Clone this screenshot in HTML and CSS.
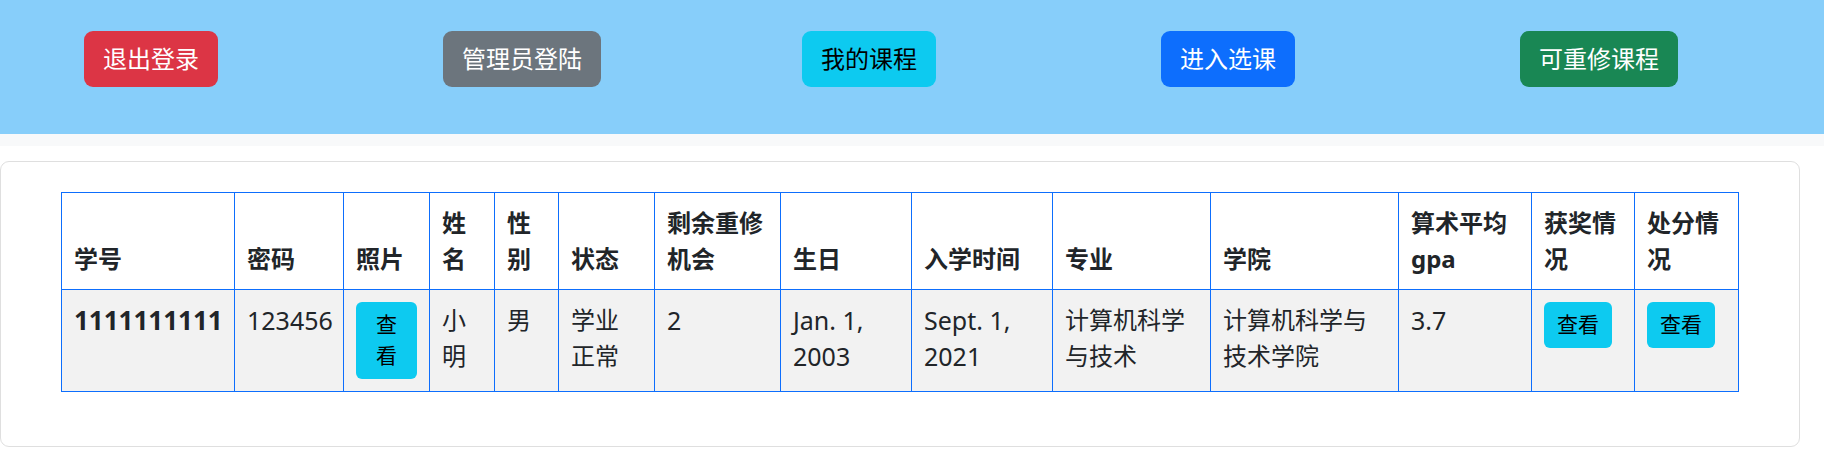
FILE: index.html
```html
<!DOCTYPE html>
<html lang="zh-CN">
<head>
<meta charset="utf-8">
<meta name="viewport" content="width=device-width, initial-scale=1">
<title>我的课程</title>
<link rel="stylesheet" href="styles.css">
</head>
<body>
<header class="topbar">
  <nav class="nav">
    <div class="nav-item"><button type="button" class="btn btn-danger">退出登录</button></div>
    <div class="nav-item"><button type="button" class="btn btn-secondary">管理员登陆</button></div>
    <div class="nav-item"><button type="button" class="btn btn-info">我的课程</button></div>
    <div class="nav-item"><button type="button" class="btn btn-primary">进入选课</button></div>
    <div class="nav-item"><button type="button" class="btn btn-success">可重修课程</button></div>
  </nav>
</header>
<main class="card">
  <table class="table">
    <colgroup>
      <col class="col-id"><col class="col-password"><col class="col-photo"><col class="col-name"><col class="col-gender"><col class="col-status"><col class="col-retake"><col class="col-birthday"><col class="col-enrolled"><col class="col-major"><col class="col-college"><col class="col-gpa"><col class="col-award"><col class="col-penalty">
    </colgroup>
    <thead>
      <tr>
        <th scope="col">学号</th>
        <th scope="col">密码</th>
        <th scope="col">照片</th>
        <th scope="col">姓名</th>
        <th scope="col">性别</th>
        <th scope="col">状态</th>
        <th scope="col">剩余重修机会</th>
        <th scope="col">生日</th>
        <th scope="col">入学时间</th>
        <th scope="col">专业</th>
        <th scope="col">学院</th>
        <th scope="col">算术平均gpa</th>
        <th scope="col">获奖情况</th>
        <th scope="col">处分情况</th>
      </tr>
    </thead>
    <tbody>
      <tr>
        <th scope="row" class="student-id">1111111111</th>
        <td class="latin">123456</td>
        <td><button type="button" class="btn btn-sm btn-info">查看</button></td>
        <td>小明</td>
        <td>男</td>
        <td>学业正常</td>
        <td class="latin">2</td>
        <td class="latin">Jan. 1, 2003</td>
        <td class="latin">Sept. 1, 2021</td>
        <td>计算机科学与技术</td>
        <td>计算机科学与技术学院</td>
        <td class="latin">3.7</td>
        <td><button type="button" class="btn btn-sm btn-info">查看</button></td>
        <td><button type="button" class="btn btn-sm btn-info">查看</button></td>
      </tr>
    </tbody>
  </table>
</main>
</body>
</html>
```

FILE: styles.css
```css
*,
*::before,
*::after {
  box-sizing: border-box;
}

body {
  margin: 0;
  background: #fff;
  color: #212529;
  font-family: "Noto Sans", "Noto Sans CJK SC", sans-serif;
  font-size: 24px;
  line-height: 36px;
}

.topbar {
  padding-bottom: 12px;
  background: #f8f9fa;
}

.nav {
  display: grid;
  grid-template-columns: repeat(5, 1fr);
  padding: 31px 29px 47px 0;
  background: #87cefa;
}

.nav-item {
  display: flex;
  padding-left: 84px;
}

.btn {
  padding: 9px 18px;
  border: 1px solid transparent;
  border-radius: 9px;
  font: inherit;
  color: #fff;
  cursor: pointer;
}

.btn-sm {
  display: block;
  padding: 6px 12px 7px;
  border-radius: 6px;
  font-size: 21px;
  line-height: 31px;
}

.btn-danger { background: #dc3545; }
.btn-secondary { background: #6c757d; }
.btn-info { background: #0dcaf0; color: #000; }
.btn-primary { background: #0d6efd; }
.btn-success { background: #198754; }

.card {
  margin: 15px 24px 24px 0;
  padding: 30px 60px;
  border: 1px solid #dfdfdf;
  border-radius: 9px;
}

.table {
  width: 100%;
  margin-bottom: 24px;
  table-layout: fixed;
  border-collapse: collapse;
}

.table th,
.table td {
  padding: 12px;
  border: 1px solid #0d6efd;
  text-align: left;
  vertical-align: top;
}

.table thead th {
  vertical-align: bottom;
}

.table tbody tr {
  background: #f2f2f2;
}

.latin { font-size: 25px; }
.student-id { font-size: 26px; }

.col-id { width: 173px; }
.col-password { width: 109px; }
.col-photo { width: 86px; }
.col-name { width: 65px; }
.col-gender { width: 64px; }
.col-status { width: 96px; }
.col-retake { width: 126px; }
.col-birthday { width: 131px; }
.col-enrolled { width: 141px; }
.col-major { width: 158px; }
.col-college { width: 188px; }
.col-gpa { width: 133px; }
.col-award { width: 103px; }
.col-penalty { width: 104px; }
```
